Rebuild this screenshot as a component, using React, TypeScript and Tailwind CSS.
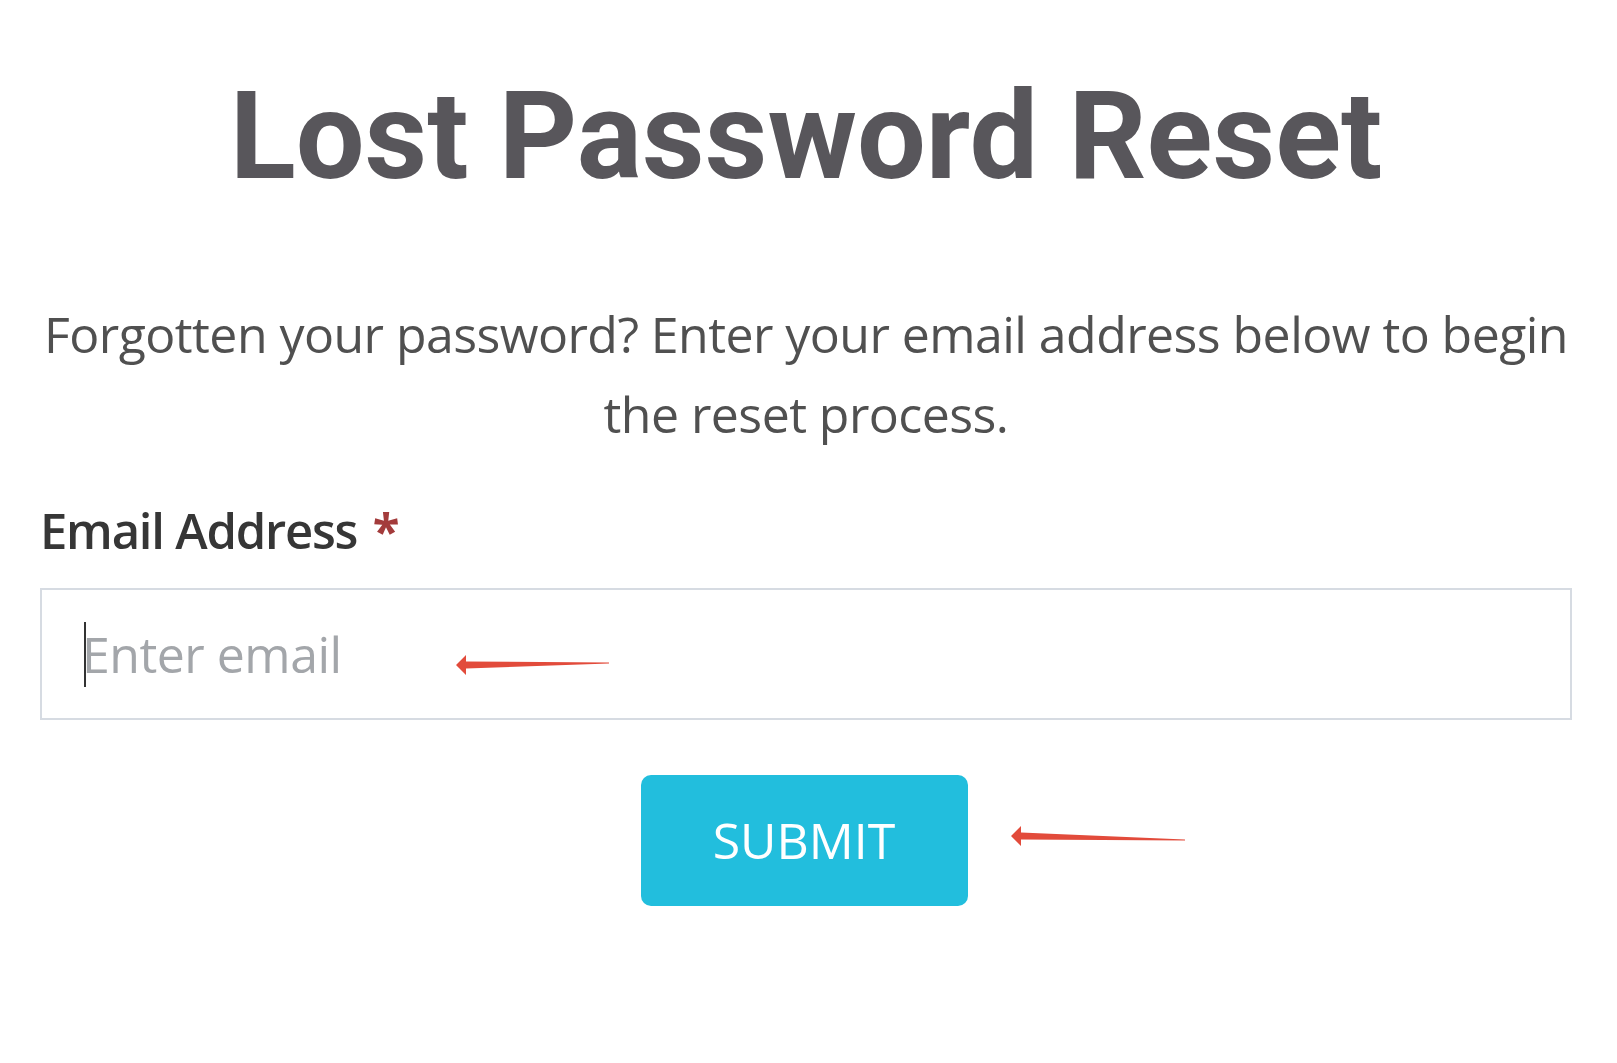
import React from 'react'

// red annotation arrow: tip on the left, shaft tapering to the right
function Arrow({ left, top, length, drop = 0 }: { left: number; top: number; length: number; drop?: number }) {
  const h = 24
  const cy = h / 2
  return (
    <svg
      className="pointer-events-none absolute"
      style={{ left, top: top - cy, width: length + 2, height: h + Math.abs(drop) + 2 }}
      viewBox={`0 0 ${length + 2} ${h + Math.abs(drop) + 2}`}
    >
      <path
        d={`M1 ${cy} L11 ${cy - 10} L11 ${cy - 3.5} L${length} ${cy - 0.6 + drop} L${length} ${cy + 0.4 + drop} L11 ${cy + 3.5} L11 ${cy + 10} Z`}
        fill="#e24b3b"
      />
    </svg>
  )
}

export default function App() {
  return (
    <div className="relative min-h-screen bg-white font-['Open_Sans','Noto_Sans',sans-serif]">
      <div className="ml-[40px] flex w-[1532px] flex-col pt-[76px]">
        <h1 className="text-center font-['Roboto',sans-serif] text-[122px] font-bold leading-[121px] text-[#58565b]">
          Lost Password Reset
        </h1>

        <p className="mt-[97px] whitespace-nowrap text-center text-[50px] leading-[80px] tracking-[-0.011em] text-[#505050]">
          Forgotten your password? Enter your email address below to begin
          <br />
          the reset process.
        </p>

        <label className="mt-[46px] block text-[49px] font-semibold leading-[60px] tracking-[-0.025em] text-[#363636]">
          Email Address <span className="ml-[4px] font-bold text-[#a33b3b]">*</span>
        </label>

        <div className="relative mt-[28px]">
          <input
            type="email"
            placeholder="Enter email"
            className="h-[132px] w-full border-2 border-[#d6dbe2] bg-white pl-[40px] text-[50px] tracking-[-0.01em] text-[#333] outline-none placeholder:text-[#a3a6aa]"
          />
          <span className="absolute left-[44px] top-[34px] h-[65px] w-[2px] bg-[#333]" />
        </div>

        <div className="mt-[55px] flex justify-center">
          <button className="ml-[-4px] h-[131px] w-[327px] rounded-[10px] bg-[#22bedd] text-[50px] text-white">
            SUBMIT
          </button>
        </div>
      </div>

      <Arrow left={455} top={665} length={154} drop={-2} />
      <Arrow left={1010} top={836} length={175} drop={4} />
    </div>
  )
}
